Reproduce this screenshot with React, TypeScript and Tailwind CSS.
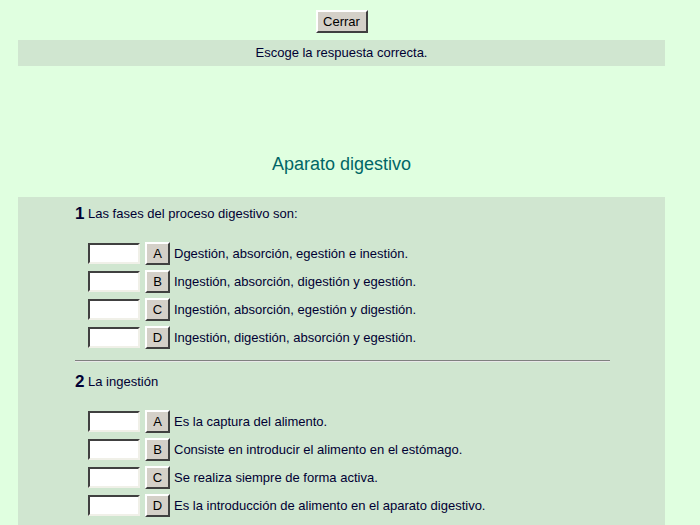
import React from "react";

type Question = {
  n: number;
  text: string;
  options: string[];
};

const questions: Question[] = [
  {
    n: 1,
    text: "Las fases del proceso digestivo son:",
    options: [
      "Dgestión, absorción, egestión e inestión.",
      "Ingestión, absorción, digestión y egestión.",
      "Ingestión, absorción, egestión y digestión.",
      "Ingestión, digestión, absorción y egestión.",
    ],
  },
  {
    n: 2,
    text: "La ingestión",
    options: [
      "Es la captura del alimento.",
      "Consiste en introducir el alimento en el estómago.",
      "Se realiza siempre de forma activa.",
      "Es la introducción de alimento en el aparato digestivo.",
    ],
  },
];

const letters = ["A", "B", "C", "D"];

function OptionRow({ letter, text }: { letter: string; text: string }) {
  return (
    <div className="flex items-center h-[23px]">
      <input
        type="text"
        className="w-[52px] h-[21px] bg-white border-2 border-t-[#404040] border-l-[#404040] border-b-[#f0f0e8] border-r-[#f0f0e8] outline-none"
      />
      <button className="ml-[5px] w-[25px] h-[23px] bg-[#d4d0c8] border-2 border-t-[#ffffff] border-l-[#ffffff] border-b-[#404040] border-r-[#404040] text-[13px] text-black leading-none flex items-center justify-center">
        {letter}
      </button>
      <span className="ml-[4px] text-[13px] text-[#000033]">{text}</span>
    </div>
  );
}

function QuestionBlock({ q }: { q: Question }) {
  return (
    <div>
      <div className="flex items-end h-[18px]">
        <span className="w-[13px] text-[17px] font-bold text-[#000033] leading-none">
          {q.n}
        </span>
        <span className="text-[13px] text-[#000033] leading-none mb-[2px]">
          {q.text}
        </span>
      </div>
      <div className="mt-[20px] ml-[13px] flex flex-col gap-[5px]">
        {q.options.map((o, i) => (
          <OptionRow key={i} letter={letters[i]} text={o} />
        ))}
      </div>
    </div>
  );
}

export default function App() {
  return (
    <div
      className="w-[700px] h-[525px] overflow-hidden bg-[#e0ffe0]"
      style={{ fontFamily: '"Liberation Sans", Arial, sans-serif' }}
    >
      <div className="ml-[18px] w-[647px]">
        <div className="pt-[10px] flex justify-center">
          <button className="w-[52px] h-[23px] bg-[#d4d0c8] border-2 border-t-[#ffffff] border-l-[#ffffff] border-b-[#404040] border-r-[#404040] text-[13px] text-black leading-none">
            Cerrar
          </button>
        </div>
        <div className="mt-[7px] h-[26px] bg-[#d0e6d0] flex items-center justify-center text-[13px] text-[#000033]">
          Escoge la respuesta correcta.
        </div>
        <div className="h-[131px] flex items-end justify-center pb-[24px]">
          <h1 className="text-[18px] text-[#006666] leading-none">Aparato digestivo</h1>
        </div>
        <div className="bg-[#d0e6d0] h-[400px] pt-[7px] pl-[57px]">
          <QuestionBlock q={questions[0]} />
          <div className="mt-[11px] mb-[10px] w-[535px] border-t border-t-[#808080] border-b border-b-[#e8e8e8]" />
          <QuestionBlock q={questions[1]} />
        </div>
      </div>
    </div>
  );
}
